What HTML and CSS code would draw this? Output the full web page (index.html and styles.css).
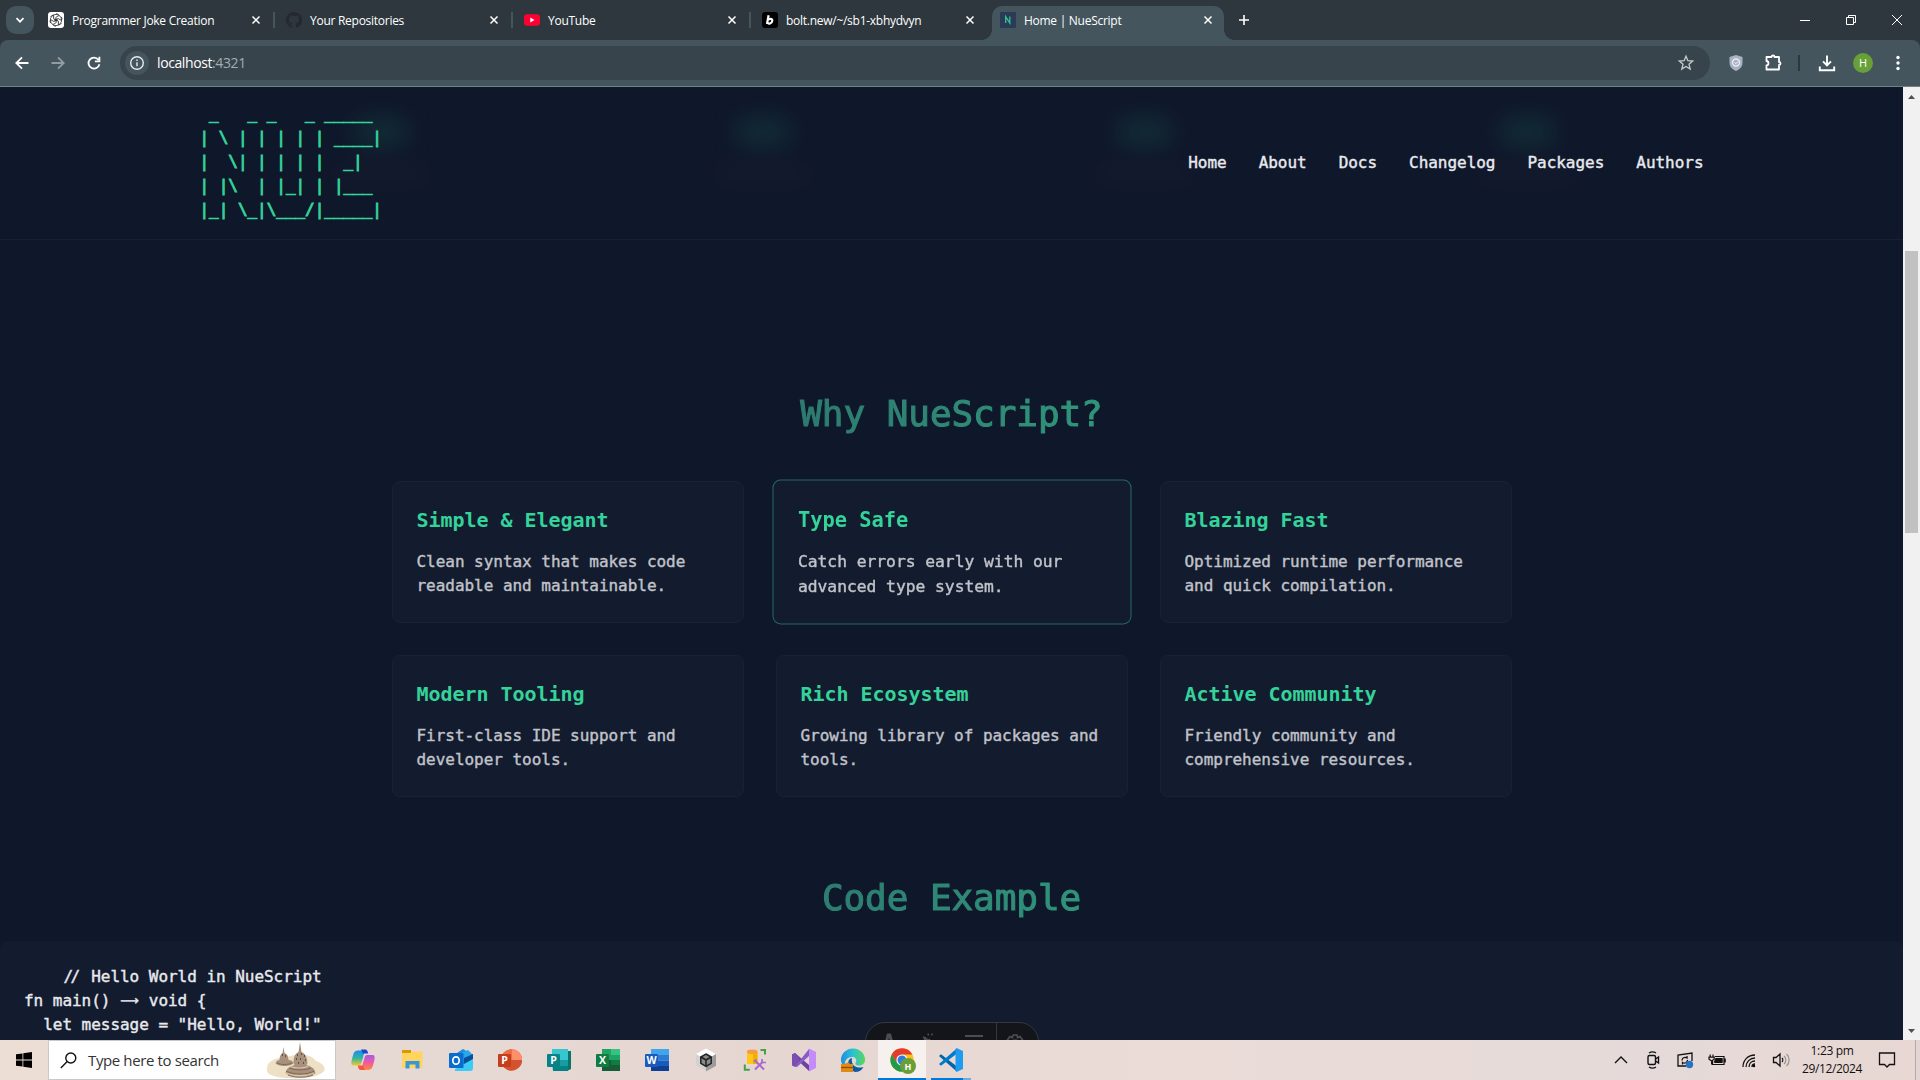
FILE: index.html
```html
<!DOCTYPE html>
<html lang="en">
<head>
<meta charset="utf-8">
<title>Home | NueScript</title>
<link rel="stylesheet" href="styles.css">
</head>
<body>
<div class="screen">

<div class="tabstrip">
  <div class="tabsearch"><svg width="12" height="12" viewBox="0 0 12 12"><path d="M2.5 4.2 6 7.7l3.500-3.500" fill="none" stroke="#fff" stroke-width="1.700"/></svg></div>
  <div class="tab">
    <svg class="fav" viewBox="0 0 16 16"><rect width="16" height="16" rx="3" fill="#fff"/><g fill="none" stroke="#333" stroke-width=".8"><path d="M8 1.800a3 3 0 0 1 3 1.700l-3.200 1.900v4.200M8 14.200a3 3 0 0 1-3-1.700l3.200-1.900V6.400"/><path d="M8 1.800a3 3 0 0 1 3 1.700l-3.200 1.900v4.200M8 14.200a3 3 0 0 1-3-1.700l3.200-1.900V6.400" transform="rotate(60 8 8)"/><path d="M8 1.800a3 3 0 0 1 3 1.700l-3.200 1.900v4.200M8 14.200a3 3 0 0 1-3-1.700l3.200-1.900V6.400" transform="rotate(120 8 8)"/><circle cx="8" cy="8" r="5.600"/></g></svg>
    <span class="label">Programmer Joke Creation</span>
    <svg class="x" viewBox="0 0 10 10"><path d="M1.500 1.500l7 7M8.500 1.500l-7 7"/></svg><i class="sep"></i>
  </div>
  <div class="tab">
    <svg class="fav" viewBox="0 0 16 16"><path fill="#24292f" d="M8 0C3.580 0 0 3.580 0 8c0 3.540 2.290 6.530 5.470 7.590.4.070.55-.17.55-.38 0-.19-.01-.82-.01-1.490-2.010.37-2.530-.49-2.690-.94-.09-.23-.48-.94-.82-1.130-.28-.15-.68-.52-.01-.53.63-.01 1.080.58 1.230.82.72 1.210 1.870.87 2.330.66.070-.52.28-.87.51-1.070-1.780-.2-3.640-.89-3.640-3.950 0-.87.31-1.590.82-2.150-.08-.2-.36-1.020.08-2.120 0 0 .67-.21 2.200.82a7.600 7.600 0 0 1 4 0c1.530-1.040 2.200-.82 2.200-.82.44 1.100.16 1.920.08 2.120.51.56.82 1.270.82 2.150 0 3.070-1.870 3.750-3.650 3.950.29.25.54.73.54 1.480 0 1.070-.01 1.930-.01 2.200 0 .21.15.46.55.38A8 8 0 0 0 16 8c0-4.420-3.580-8-8-8z"/></svg>
    <span class="label">Your Repositories</span>
    <svg class="x" viewBox="0 0 10 10"><path d="M1.500 1.500l7 7M8.500 1.500l-7 7"/></svg><i class="sep"></i>
  </div>
  <div class="tab">
    <svg class="fav" viewBox="0 0 16 16"><rect y="2.300" width="16" height="11.400" rx="3" fill="#f03"/><path d="M6.300 5.600v4.800L10.500 8z" fill="#fff"/></svg>
    <span class="label">YouTube</span>
    <svg class="x" viewBox="0 0 10 10"><path d="M1.500 1.500l7 7M8.500 1.500l-7 7"/></svg><i class="sep"></i>
  </div>
  <div class="tab">
    <svg class="fav" viewBox="0 0 16 16"><rect width="16" height="16" rx="3" fill="#000"/><path d="M6.600 3.200 5 12M5.900 8c1-1.600 4.600-1.700 4.400.7-.3 3.100-4 3.600-4.900 1.900" fill="none" stroke="#fff" stroke-width="2.200"/></svg>
    <span class="label">bolt.new/~/sb1-xbhydvyn</span>
    <svg class="x" viewBox="0 0 10 10"><path d="M1.500 1.500l7 7M8.500 1.500l-7 7"/></svg>
  </div>
  <div class="tab active">
    <svg class="fav" viewBox="0 0 16 16"><rect width="16" height="16" rx="1" fill="#2b3a55"/><path d="M5.700 11V4.700L9.800 11V4.500" fill="none" stroke="#2fc596" stroke-width="1.300"/></svg>
    <span class="label">Home | NueScript</span>
    <svg class="x" viewBox="0 0 10 10"><path d="M1.500 1.500l7 7M8.500 1.500l-7 7"/></svg>
  </div>
  <svg class="plus" viewBox="0 0 12 12"><path d="M6 1v10M1 6h10"/></svg>
  <div class="wincontrols">
    <svg viewBox="0 0 10 10"><path d="M0 5.500h10"/></svg>
    <svg viewBox="0 0 10 10"><path d="M.5 2.500h7v7h-7zM2.500 2.500v-2h7v7h-2"/></svg>
    <svg viewBox="0 0 10 10"><path d="M0 0l10 10M10 0 0 10"/></svg>
  </div>
</div>

<div class="toolbarwrap"><div class="toolbar">
  <svg class="tb" viewBox="0 0 16 16"><path d="M14.500 8H2.500M8 2.300 2.300 8 8 13.700"/></svg>
  <svg class="tb dim" viewBox="0 0 16 16"><path d="M1.500 8h12M8 2.300 13.700 8 8 13.700"/></svg>
  <svg class="tb" viewBox="0 0 16 16"><path d="M13.400 9.200A5.500 5.500 0 1 1 12.400 4.700M13.400 1.800v4.500H8.900"/></svg>
  <div class="omnibox">
    <div class="info"><svg width="16" height="16" viewBox="0 0 16 16"><circle cx="8" cy="8" r="6.300" fill="none" stroke="#e6eaec" stroke-width="1.400"/><path d="M8 7.200v4M8 4.500v1.500" stroke="#e6eaec" stroke-width="1.400"/></svg></div>
    <span class="url">localhost<span>:4321</span></span>
    <svg class="star" width="18" height="18" viewBox="0 0 18 18"><path d="M9 2.200l1.900 4.500 4.800.4-3.700 3.200 1.200 4.800L9 12.500l-4.200 2.600L6 10.300 2.300 7.100l4.800-.4z" fill="none" stroke="#c6cccf" stroke-width="1.300"/></svg>
  </div>
  <div class="actions">
    <svg width="14" height="16" viewBox="0 0 14 16"><path d="M7 0l6.500 2v6c0 4-3.500 6.800-6.500 8C4 14.800.5 12 .5 8V2z" fill="#a9b2c2"/><circle cx="7" cy="7.500" r="3.500" fill="none" stroke="#e8edf4" stroke-width="1.400"/><path d="M5.500 7.500l1.300 1.300L9 6.300" fill="none" stroke="#eef" stroke-width="1"/></svg>
    <svg class="puzzle" width="20" height="20" viewBox="0 0 20 20"><path d="M3.500 4H8.500a1.500 1.500 0 0 1 3 0h4.500V9a1.500 1.500 0 0 1 0 3v4.500H3.500v-4c2.600-.2 2.600-4.300 0-4.500z" fill="none" stroke="#fff" stroke-width="1.800" stroke-linejoin="round"/></svg>
    <i></i>
    <svg class="download" width="18" height="18" viewBox="0 0 18 18"><path d="M9 1.500v9.500M5 7.300l4 4 4-4M1.800 12.500v3.700h14.400v-3.700" fill="none" stroke="#fff" stroke-width="1.900"/></svg>
    <b>H</b>
    <svg class="more" width="4" height="16" viewBox="0 0 4 16"><g fill="#fff"><circle cx="2" cy="2.500" r="1.700"/><circle cx="2" cy="8" r="1.700"/><circle cx="2" cy="13.500" r="1.700"/></g></svg>
  </div>
</div></div>

<div class="viewport">
  <main class="page">
    <header class="header">
      <div class="stats">
        <div><i></i><u></u></div><div><i></i><u></u></div><div><i></i><u></u></div><div><i></i><u></u></div>
      </div>
<pre class="logo"> _   _ _   _ _____ 
| \ | | | | | ____|
|  \| | | | |  _|  
| |\  | |_| | |___ 
|_| \_|\___/|_____|</pre>
      <nav class="nav"><a>Home</a><a>About</a><a>Docs</a><a>Changelog</a><a>Packages</a><a>Authors</a></nav>
    </header>
    <section class="why">
      <h2>Why NueScript?</h2>
      <div class="grid">
        <article class="card"><h3>Simple &amp; Elegant</h3><p>Clean syntax that makes code readable and maintainable.</p></article>
        <article class="card hover"><h3>Type Safe</h3><p>Catch errors early with our advanced type system.</p></article>
        <article class="card"><h3>Blazing Fast</h3><p>Optimized runtime performance and quick compilation.</p></article>
        <article class="card"><h3>Modern Tooling</h3><p>First-class IDE support and developer tools.</p></article>
        <article class="card"><h3>Rich Ecosystem</h3><p>Growing library of packages and tools.</p></article>
        <article class="card"><h3>Active Community</h3><p>Friendly community and comprehensive resources.</p></article>
      </div>
    </section>
    <section class="example">
      <h2>Code Example</h2>
<pre class="code">    <span class="slashes">//</span> Hello World in NueScript
fn main() <span class="arrow">⟶</span> void {
  let message = "Hello, World!"</pre>
    </section>
    <div class="devbar">
      <div class="devicons">
        <svg width="20" height="20" viewBox="0 0 20 20"><path d="M4.500 14 8 .5h4L15.500 14h-3.300L10 4.500 7.800 14z" fill="#4b4d55"/></svg>
        <svg width="20" height="20" viewBox="0 0 20 20"><path d="M1 4l12 6.500M2.500 5v5M6.500 2.500 6 .5M9.500 2.500l1-2M3 4l3 6M7 6l4 5" fill="none" stroke="#4b4d55" stroke-width="1.500"/></svg>
        <svg width="20" height="20" viewBox="0 0 20 20"><path d="M1 3h18M1 11h18M14 7v6" fill="none" stroke="#4b4d55" stroke-width="2"/></svg>
      </div>
      <div class="devgear"><svg width="20" height="20" viewBox="0 0 20 20"><path d="M8 2h4l.6 2.500 2.400-.9 2.300 3L15.500 9v3l1.500 3M8 2l-.6 2.500L5 3.600l-2.300 3L4.500 9v3L3 15" fill="none" stroke="#4b4d55" stroke-width="1.700"/><circle cx="10" cy="10" r="3" fill="none" stroke="#4b4d55" stroke-width="1.700"/></svg></div>
    </div>
  </main>
  <div class="scrollbar">
    <svg width="9" height="5" viewBox="0 0 9 5"><path d="M1 5l3.500-4L8 5z" fill="#505050"/></svg>
    <div class="thumb"></div>
    <svg width="9" height="5" viewBox="0 0 9 5"><path d="M1 0l3.500 4L8 0z" fill="#505050"/></svg>
  </div>
</div>

<div class="taskbar">
  <div class="start"><svg width="16" height="16" viewBox="0 0 16 16"><path d="M0 2.300 6.500 1.400v6.200H0zM7.300 1.300 16 0v7.600H7.300zM0 8.400h6.500v6.200L0 13.700zM7.300 8.400H16V16l-8.700-1.300z"/></svg></div>
  <div class="search">
    <svg width="17" height="17" viewBox="0 0 17 17"><circle cx="10.800" cy="6" r="5" fill="none" stroke="#111" stroke-width="1.400"/><path d="M7.200 9.600.8 16" stroke="#111" stroke-width="1.400"/></svg>
    <span>Type here to search</span>
    <svg class="temple" width="60" height="37" viewBox="0 0 60 37"><path d="M1 26c1-8 9-10 20-11 14-5 25-2 29 4 9 3 12 10 4 13-9 6-39 5-46 2-5-1-8-4-7-8z" fill="#eee0c4"/><path d="M34 0l1.500 10c4.500 2 5.500 6 6 11l-1 2c4 1 7 3 8 5l1 3c-5 5-25 5-30 0l1-3c1-2 4-4 8-5l-1-2c0-5 1-9 5-11z" fill="#a8917c"/><path d="M17.500 5l1 6c3 1 4 4 4 7 3 0 4 1 5 3-2 4-16 4-18 0 1-2 2-3 4-3 0-3 1-6 3-7z" fill="#a8917c"/><path d="M20 29c7 4 22 4 28 0M23 26c7 2.500 15 2.500 22 0M22 33c7 3 18 3 25 0M11 21c4 2 11 2 15 0" fill="none" stroke="#7a6250" stroke-width=".9"/><path d="M31 13h1M35 12h1M38 14h1M30 17h1M34 17h1M39 18h1M32 21h1M37 21h1M16 13h1M19 14h1" stroke="#4d392c" stroke-width="1.700"/><path d="M20 31c8 3.500 20 3.500 28 0M24 24.500c5 2 13 2 18 0" fill="none" stroke="#d9c3aa" stroke-width="1.200"/></svg>
  </div>
  <div class="apps">
    <div class="app"><svg viewBox="0 0 24 24"><defs><linearGradient id="c1" x1="0" y1="0" x2="0" y2="1"><stop offset="0" stop-color="#1b8cf0"/><stop offset=".5" stop-color="#2eb5a5"/><stop offset="1" stop-color="#f3c92c"/></linearGradient><linearGradient id="c2" x1="0" y1="0" x2="0" y2="1"><stop offset="0" stop-color="#a45cf0"/><stop offset=".5" stop-color="#ee5aa0"/><stop offset="1" stop-color="#ff8a3c"/></linearGradient></defs><path d="M7 2.500h8.500c-2 1-2.500 3-3.500 7l-1.700 6c-.6 1.800-1.700 2-3 2H3c-2.800 0-3-2-2.400-5l1.600-6C3 3.800 4.500 2.500 7 2.500z" fill="url(#c1)"/><path d="M10 1.500h4c2 0 2.500 1.200 3.200 4H12z" fill="#1c46c8"/><path d="M17 22H8.500c2-1 2.500-3 3.500-7l1.700-6c.6-1.800 1.700-2 3-2H21c2.800 0 3 2 2.400 5l-1.600 6c-.8 2.700-2.300 4-4.800 4z" fill="url(#c2)"/><path d="M14 22h-4c-2 0-2.500-1.200-3.200-4.500H12z" fill="#f4553c"/></svg></div>
    <div class="app"><svg viewBox="0 0 24 24"><path d="M2 2h9v3H2z" fill="#d99a00"/><path d="M2 5h8.500l1.500-1.500H22.500V20H2z" fill="#ffd45f"/><path d="M5.500 20.500V13h14v7.500h-4v-4H9.500v4z" fill="#3b95db"/></svg></div>
    <div class="app"><svg viewBox="0 0 24 24"><path d="M5 7l9-6 10 6v5L14 17 5 11z" fill="#1490df"/><path d="M12 5l7-3 5 5-9 8z" fill="#28a8ea"/><path d="M15 10l9-4v5l-9 6z" fill="#0a4f9c"/><path d="M6 23h15c2 0 3-1 3-3v-9L6 21z" fill="#3ccbf4"/><rect y="5" width="14.500" height="15" rx="1" fill="#0a6cce"/><ellipse cx="7" cy="12.500" rx="3.200" ry="3.700" fill="none" stroke="#fff" stroke-width="1.700"/></svg></div>
    <div class="app"><svg viewBox="0 0 24 24"><circle cx="13.500" cy="12" r="10.700" fill="#d35230"/><path d="M13.500 1.300V12h10.700A10.700 10.700 0 0 0 13.500 1.300z" fill="#ff8f6b"/><path d="M13.500 1.300A10.700 10.700 0 0 0 2.800 12h10.700z" fill="#ed6c47"/><rect y="6" width="13" height="13" rx="1" fill="#c43e1c"/><text x="6.500" y="16.300">P</text></svg></div>
    <div class="app"><svg viewBox="0 0 24 24"><path d="M20 3h4v18l-4 2z" fill="#077568"/><path d="M5 1h16v11H5z" fill="#37c6d0"/><path d="M5 12h16v11H6z" fill="#038387"/><path d="M13 12h8v6h-8z" fill="#1b9aa0"/><rect y="6" width="13" height="13" rx="1" fill="#058387"/><text x="6.500" y="16.300">P</text></svg></div>
    <div class="app"><svg viewBox="0 0 24 24"><path d="M6 1h9v11H6z" fill="#21a366"/><path d="M15 1h9v6h-9z" fill="#33c481"/><path d="M15 7h9v5h-9z" fill="#21a366"/><path d="M6 12h18v11H6z" fill="#185c37"/><path d="M15 12h9v5h-9z" fill="#107c41"/><rect y="6" width="13" height="13" rx="1" fill="#107c41"/><text x="6.500" y="16.300">X</text></svg></div>
    <div class="app"><svg viewBox="0 0 24 24"><path d="M6 1h18v6H6z" fill="#41a5ee"/><path d="M6 7h18v5.500H6z" fill="#2b7cd3"/><path d="M6 12.500h18V18H6z" fill="#185abd"/><path d="M6 18h18v5H6z" fill="#103f91"/><rect y="6" width="13" height="13" rx="1" fill="#185abd"/><text x="6.500" y="16.300">W</text></svg></div>
    <div class="app"><svg viewBox="0 0 24 24"><path d="M12 .5 22 6v12l-10 5.500L2 18V6z" fill="#fff"/><path d="M12 12l10-6v12l-10 5.500z" fill="#9c9c9c"/><path d="M12 12 2 6v12l10 5.500z" fill="#d2d2d2"/><path d="M12 6l5.200 3v6.300L12 18.300l-5.200-3V9z" fill="#8a8a8a" stroke="#222" stroke-width="1.500"/><path d="M12 12v6M12 12 7 9M12 12l5-3" stroke="#222" stroke-width="1.500"/></svg></div>
    <div class="app"><svg viewBox="0 0 24 24"><path d="M4 4h10.500v12H4z" fill="#ffc814"/><path d="M10 4h4.500v12H10z" fill="#f2b100"/><ellipse cx="9.200" cy="3.800" rx="5.300" ry="2.200" fill="#f59a45"/><path d="M17.500 2H22v4.500M1.800 16.500v5.200h5" fill="none" stroke="#43a047" stroke-width="2"/><path d="M12 21.500l8-8M12.500 13l8.500 8.500" fill="none" stroke="#ab68cf" stroke-width="2"/><path d="M10.500 13.500l3-2M19 11v3.500h4" fill="none" stroke="#ab68cf" stroke-width="1.700"/></svg></div>
    <div class="app"><svg viewBox="0 0 24 24"><path d="M0 6.500 3 5l14 12v6L0 7z" fill="#6b43a0"/><path d="M0 6.500 3 5l4 4v7l-4 3-3-1.500z" fill="#7b4fb0"/><path d="M3 18.500 17 1v7L5 19z" fill="#8a5bc4"/><path d="M17 .5 24 4v16l-7 3.500z" fill="#c48cf8"/></svg></div>
    <div class="app"><svg viewBox="0 0 24 24"><defs><linearGradient id="e1"><stop offset="0" stop-color="#1b8fe0"/><stop offset=".5" stop-color="#2bc3d2"/><stop offset="1" stop-color="#5ad65a"/></linearGradient></defs><path d="M0 12a12 11.500 0 0 1 24 0c0 4-3.500 5.500-6 5.500-3 0-4.500-1.500-3-3.500 1-3-1-5-4-5-5 0-8 4-7 9-3-1-4-4-4-6z" fill="url(#e1)"/><path d="M11 10c-6 1-5 12 3 14 4 0 7-2 8.500-5-6 2-13-1-11.500-9z" fill="#0c59a4"/><path d="M4.500 16v-1.200h4V16H12v8H0v-8z" fill="#e08a12"/><path d="M0 19.500h12" stroke="#8a4b08" stroke-width="1.200"/></svg></div>
    <div class="app current"><svg viewBox="0 0 24 24" overflow="visible"><circle cx="12" cy="12" r="11.700" fill="#fbc116"/><path d="M1.700 6.500A11.700 11.700 0 0 1 22.300 6.500H12L7 15z" fill="#e33b2e"/><path d="M1.700 6.500A11.700 11.700 0 0 0 12 23.700l5-8.700H7z" fill="#229a4a"/><circle cx="12" cy="12" r="5.600" fill="#fff"/><circle cx="12" cy="12" r="4.500" fill="#2f7de1"/><circle cx="18" cy="18" r="8" fill="#689f38"/><text x="18" y="21.500" class="badge">H</text></svg></div>
    <div class="app open"><svg viewBox="0 0 24 24"><path d="M0 8l2-1.700 16 12.200v5.200z" fill="#0065a9"/><path d="M0 16l2 1.700L18 5.500V.3z" fill="#007acc"/><path d="M17.500 0 24 3v18l-6.500 3-1-1.500V1.500z" fill="#1f9cf0"/></svg></div>
  </div>
  <div class="tray">
    <svg viewBox="0 0 20 20"><path d="M4 13l6-6 6 6" fill="none" stroke="#111" stroke-width="1.400"/></svg>
    <svg viewBox="0 0 20 20"><g fill="none" stroke="#111" stroke-width="1.400"><rect x="5" y="5.500" width="7.500" height="9" rx="1.500"/><path d="M12.500 9l3-2v6l-3-2M6 3c2-1.300 5-1.300 7 0M6 17c2 1.300 5 1.300 7 0"/></g></svg>
    <svg viewBox="0 0 20 20"><g fill="none" stroke="#111" stroke-width="1.300"><path d="M11 16H3V5l14-2v8M7 10.500c0-2.500 2.500-4 5-2.500V6M12.500 10c0 2.500-2.500 4-5 2.500v2"/></g><circle cx="14.500" cy="14.500" r="3.700" fill="#2673c4"/></svg>
    <svg viewBox="0 0 20 20"><path d="M8.500 8.500h7v4h-9z" fill="#111"/><path d="M5.500 11v3.500h11.500V6.500H8M18.200 8.500v4M3.200 4.500v2.500M6 4.500v2.500M2 7.200h5.200v2L4.600 11 2 9.200zM4.600 11v3.500" fill="none" stroke="#111" stroke-width="1.200"/><path d="M8.500 8h7v5h-8z" fill="#111"/></svg>
    <svg viewBox="0 0 20 20"><path d="M4 17C4 10 9 5 16 5M7 17c0-5 4-9 9-9M10 17c0-3.500 2.500-6 6-6M13 17c0-2 1-3 3-3" fill="none" stroke="#111" stroke-width="1.300"/><circle cx="15" cy="16" r="1.200"/></svg>
    <svg viewBox="0 0 20 20"><path d="M2.500 7.500H5L9 4v12l-4-3.500H2.500zM11 8c1 1 1 3 0 4" fill="none" stroke="#111" stroke-width="1.300"/><path d="M13 6c2.500 2 2.500 6 0 8M15.500 4c3.500 3 3.500 9 0 12" fill="none" stroke="#9a908e" stroke-width="1.200"/></svg>
  </div>
  <div class="clock"><span>1:23 pm</span><span>29/12/2024</span></div>
  <svg class="note" width="18" height="18" viewBox="0 0 18 18"><path d="M1.500 2h15v11.500h-5L9 16l-2.500-2.500h-5z" fill="none" stroke="#111" stroke-width="1.300"/></svg>
</div>
</div>
</body>
</html>
```
FILE: styles.css
```css
* { box-sizing: border-box; }
body { margin: 0; background: #0f172a; }
.screen { width: 1920px; height: 1080px; overflow: hidden; display: flex; flex-direction: column; font-family: "Open Sans", "Noto Sans", sans-serif; }
svg { display: block; flex: none; }

/* browser tabs */
.tabstrip { height: 40px; flex: none; background: #2d373d; display: flex; align-items: flex-end; padding-left: 6px; }
.tabsearch { width: 28px; height: 28px; margin: 0 6px 6px 0; border-radius: 10px; background: #44555e; display: flex; align-items: center; justify-content: center; }
.tab { width: 238px; height: 34px; flex: none; display: flex; align-items: center; padding: 0 2px 6px 8px; }
.fav { width: 16px; height: 16px; margin-right: 8px; }
.label { flex: 1; padding-top: 2px; font-size: 12px; line-height: 16px; letter-spacing: -0.27px; color: #fff; white-space: nowrap; }
.x { width: 10px; height: 10px; margin-right: 12px; }
.x path { stroke: #fff; stroke-width: 1.5; }
.sep { width: 2px; height: 16px; background: #44555e; margin-right: 1px; }
.tab:nth-child(5) .x { margin-right: 15px; }
.tab.active { width: 232px; height: 34px; background: #44555e; border-radius: 10px 10px 0 0; position: relative; }
.tab.active .x { margin-right: 9px; }
.tab.active::before, .tab.active::after { content: ""; position: absolute; bottom: 0; width: 10px; height: 10px; }
.tab.active::before { left: -10px; background: radial-gradient(circle at 0 0, transparent 9.5px, #44555e 10px); }
.tab.active::after { right: -10px; background: radial-gradient(circle at 100% 0, transparent 9.5px, #44555e 10px); }
.plus { width: 12px; height: 12px; margin: 0 0 14px 14px; }
.plus path { stroke: #fff; stroke-width: 1.6; }
.wincontrols { margin-left: auto; display: flex; gap: 36px; padding: 0 18px 15px 0; }
.wincontrols svg { width: 10px; height: 10px; }
.wincontrols path { fill: none; stroke: #fff; stroke-width: 1; }

/* address bar */
.toolbarwrap { height: 47px; flex: none; background: #2d373d; }
.toolbar { height: 47px; background: #44555e; border-bottom: 1px solid #6f8287; border-radius: 8px 8px 0 0; display: flex; align-items: center; padding: 0 20px 0 14px; }
.tb { width: 16px; height: 16px; margin-right: 20px; }
.tb path { fill: none; stroke: #fff; stroke-width: 1.8; }
.tb.dim { opacity: .42; }
.omnibox { width: 1590px; height: 34px; border-radius: 17px; background: #38444b; margin-left: -2px; display: flex; align-items: center; padding: 0 15px 0 5px; }
.info { width: 24px; height: 24px; border-radius: 50%; background: #44555e; display: flex; align-items: center; justify-content: center; }
.url { margin-left: 8px; font-size: 14px; line-height: 20px; padding-bottom: 1px; letter-spacing: -0.4px; color: #fff; }
.url span { color: #a3adb1; }
.star { margin-left: auto; }
.actions { margin-left: 19px; flex: 1; display: flex; align-items: center; }
.actions i { width: 2px; height: 16px; margin-left: 15px; background: #2d373d; }
.actions b { width: 20px; height: 20px; margin-left: 17px; border-radius: 50%; background: #689f38; color: #fff; font-size: 11px; font-weight: 400; line-height: 20px; text-align: center; }
.puzzle { margin-left: 20px; }
.download { margin-left: 18px; }
.more { margin-left: auto; }

/* page */
.viewport { flex: 1; min-height: 0; display: flex; }
.page { width: 1903px; height: 953px; overflow: hidden; position: relative; background: #0f172a; color: #e8eaed; font-family: "DejaVu Sans Mono", monospace; font-size: 16px; line-height: 24px; letter-spacing: -0.032px; -webkit-text-stroke: 0.4px currentColor; }
.header { height: 153px; padding: 16px 199.5px; border-bottom: 1px solid #182032; display: flex; justify-content: space-between; align-items: center; position: relative; }
.stats { position: absolute; inset: 0 0 0 190px; display: flex; }
.stats div { width: 382px; padding-top: 32px; display: flex; flex-direction: column; align-items: center; }
.stats i { width: 52px; height: 26px; background: #1c6658; opacity: .3; filter: blur(13px); }
.stats u { width: 92px; height: 14px; margin-top: 22px; background: #3a3040; opacity: .2; filter: blur(11px); }
.logo { margin: -3px 0 0; font: inherit; color: #34d399; position: relative; -webkit-text-stroke: 0.9px #34d399; }
.nav { display: flex; gap: 32px; position: relative; }
h2 { margin: 0; height: 54px; line-height: 56px; font-size: 36px; font-weight: 400; letter-spacing: -0.07px; text-align: center; color: transparent; background: linear-gradient(90deg, #2d7b70 800px, #30957b 1100px); -webkit-background-clip: text; background-clip: text; -webkit-text-stroke: 1.1px transparent; }
.why { padding-top: 146px; }
.grid { width: 1120px; margin: 41px auto 0; display: grid; grid-template-columns: repeat(3, 352px); grid-auto-rows: 142px; gap: 32px; }
.card { padding: 23px 24px 24px; border: 1px solid #192134; border-radius: 8px; background: #131b2f; }
.card.hover { transform: scale(1.02); border-color: #226a60; }
.card h3 { margin: 0 0 15px; font-size: 20px; line-height: 30px; font-weight: 700; letter-spacing: -0.04px; color: #34d399; -webkit-text-stroke: 0; }
.card p { margin: 0; color: #c0c3c9; }
.example { padding-top: 73px; }
.code { margin: 17px 0 0; padding: 24px; height: 200px; border-radius: 8px; background: #131b2f; font: inherit; }
.slashes { display: inline-block; width: 19.2px; height: 24px; vertical-align: top; padding-left: 1px; letter-spacing: -2.5px; }
.arrow { display: inline-block; width: 19.2px; height: 24px; vertical-align: top; text-align: center; font-family: "DejaVu Sans", sans-serif; font-size: 13px; letter-spacing: 0; }
.devbar { position: absolute; left: 865px; top: 935px; width: 174px; height: 40px; border: 1px solid #343841; border-radius: 20px 20px 0 0; background: #13151a; display: flex; }
.devicons { width: 131px; border-right: 1px solid #343841; display: flex; justify-content: space-between; padding: 10px 12px 0 13px; }
.devgear { padding: 10px 0 0 8px; }
.scrollbar { width: 17px; background: #f1f1f1; display: flex; flex-direction: column; align-items: center; padding: 7px 0 6px; }
.thumb { width: 13px; height: 282px; margin: 152px 0 auto; background: #c1c1c1; }

/* taskbar */
.taskbar { height: 40px; flex: none; background: linear-gradient(90deg, #ecddd5 0, #e6d8d3 20%, #e5d6d2 42%, #ebdcd7 60%, #e5dad9 86%, #e8d7d2 100%); display: flex; align-items: center; color: #111; border-right: 4px solid #e3d5d1; box-shadow: inset -1px 0 #b5aaa8; }
.start { width: 48px; display: flex; justify-content: center; }
.search { width: 288px; height: 40px; border: 1px solid #c9c9c9; background: #fff; display: flex; align-items: center; padding-left: 11px; }
.search span { margin-left: 11px; font-size: 15px; letter-spacing: -0.38px; color: #333; white-space: nowrap; }
.temple { margin: 0 9px 0 auto; }
.apps { display: flex; margin-left: 3px; gap: 1px; }
.app { width: 48px; height: 40px; display: flex; align-items: center; justify-content: center; }
.app svg { width: 24px; height: 24px; }
.app text { font-size: 10.500px; font-weight: 700; fill: #fff; text-anchor: middle; }
.app .badge { font-size: 9px; }
.app.current { background: #f6f0ee; border-bottom: 2px solid #0078d7; padding-top: 2px; }
.app.open { background: linear-gradient(90deg, #0078d7 32px, #6aaee2 32px) 4px 38px / 40px 2px no-repeat; }
.tray { display: flex; gap: 12px; margin-left: auto; }
.tray svg { width: 20px; height: 20px; }
.clock { width: 70px; margin-left: 6px; font-size: 12px; line-height: 18px; letter-spacing: -0.35px; display: flex; flex-direction: column; align-items: center; white-space: nowrap; }
.note { margin: 0 20px 0 11px; }
```
